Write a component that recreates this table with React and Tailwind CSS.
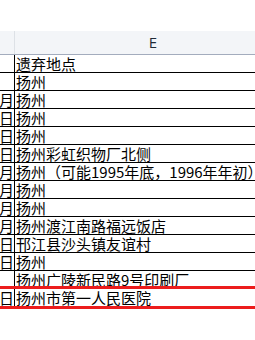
import React from "react";

const rows = [
  ["", "遗弃地点"],
  ["", "扬州"],
  ["月", "扬州"],
  ["日", "扬州"],
  ["日", "扬州"],
  ["日", "扬州彩虹织物厂北侧"],
  ["月", "扬州（可能1995年底，1996年年初）"],
  ["月", "扬州"],
  ["月", "扬州"],
  ["月", "扬州渡江南路福远饭店"],
  ["日", "邗江县沙头镇友谊村"],
  ["日", "扬州"],
  ["", "扬州广陵新民路9号印刷厂"],
  ["日", "扬州市第一人民医院"],
];

export default function App() {
  return (
    <div
      className="relative w-[255px] h-[340px] bg-white overflow-hidden"
      style={{ fontFamily: '"Noto Sans CJK SC", "Noto Sans", sans-serif' }}
    >
      <div className="w-[291px]">
        <div className="h-[31px]" />
        <div className="flex h-[24px] bg-[#f3f5f8] border-b border-[#a3acbd]">
          <div className="w-[15px] shrink-0 border-r border-[#dde1e6]" />
          <div
            className="flex-1 flex items-center justify-center text-[15px] text-[#1f2a36]"
            style={{ fontFamily: '"Open Sans", "Noto Sans", sans-serif' }}
          >
            E
          </div>
        </div>
        {rows.map(([l, r], i) => (
          <div key={i} className="flex h-[18px] border-b border-black">
            <div className="w-[15px] shrink-0 border-r border-black overflow-hidden flex justify-end">
              <span className="text-[15px] leading-[17px] text-black whitespace-nowrap">{l}</span>
            </div>
            <div className="flex-1 pl-[1px] text-[15px] leading-[17px] text-black whitespace-nowrap overflow-hidden">
              {r}
            </div>
          </div>
        ))}
      </div>
      <div className="absolute left-0 top-[286px] w-full h-[3px] bg-[#ec1c1c]" />
      <div className="absolute left-0 top-[306px] w-full h-[3px] bg-[#ec1c1c]" />
    </div>
  );
}
